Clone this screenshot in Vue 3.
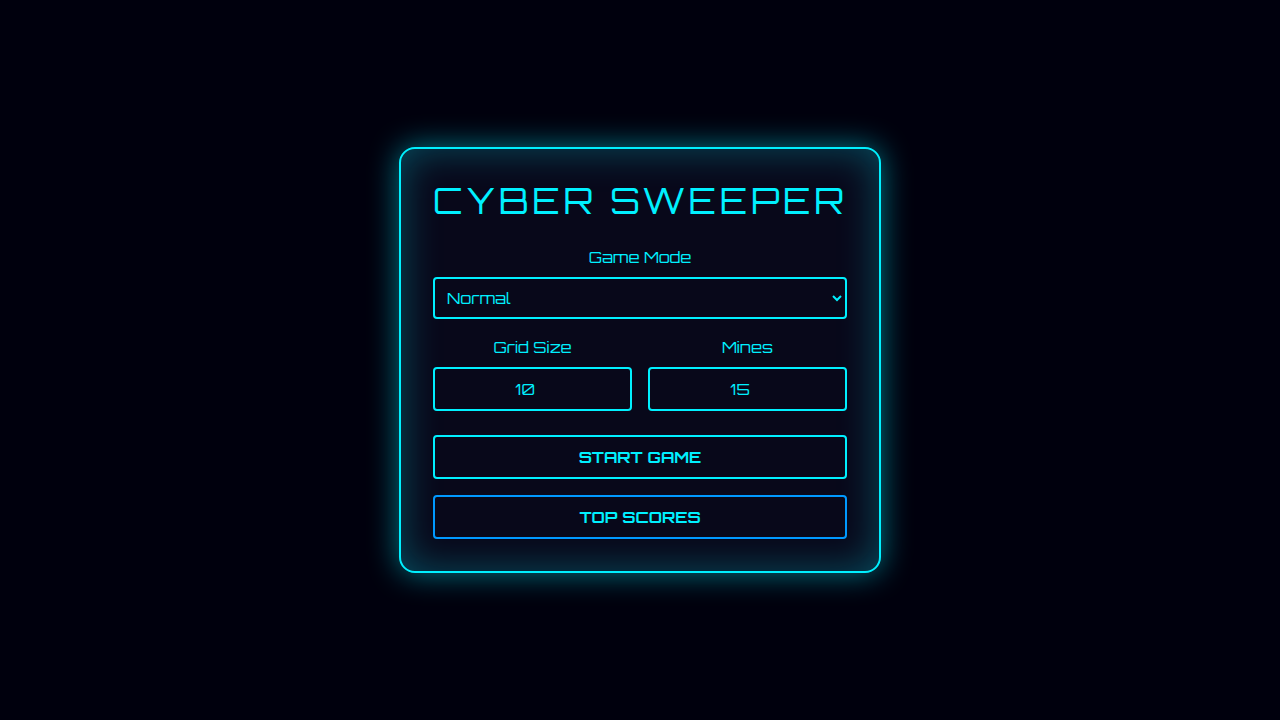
<template>
  <div class="screen">
    <div class="menu">
      <h1 class="title">CYBER SWEEPER</h1>

      <div class="field">
        <label class="label">Game Mode</label>
        <select v-model="mode" class="control select">
          <option v-for="m in modes" :key="m">{{ m }}</option>
        </select>
      </div>

      <div class="row">
        <div class="field">
          <label class="label">Grid Size</label>
          <input v-model="gridSize" class="control number" type="number" />
        </div>
        <div class="field">
          <label class="label">Mines</label>
          <input v-model="mines" class="control number" type="number" />
        </div>
      </div>

      <button class="btn">START GAME</button>
      <button class="btn btn-alt">TOP SCORES</button>
    </div>
  </div>
</template>

<script setup>
import { ref } from "vue";

const modes = ["Normal", "Hard", "Insane"];
const mode = ref("Normal");
const gridSize = ref(10);
const mines = ref(15);
</script>

<style>
html,
body {
  background: #00000d;
}
</style>

<style scoped>
.screen {
  display: flex;
  align-items: center;
  justify-content: center;
  min-height: 100vh;
  background: #00000d;
  font-family: Orbitron, "DejaVu Sans", sans-serif;
  color: #00f0ff;
}

.menu {
  box-sizing: border-box;
  display: flex;
  flex-direction: column;
  width: 482px;
  padding: 32px;
  border: 2px solid #00f0ff;
  border-radius: 16px;
  background: #08081a;
  box-shadow: 0 0 30px rgba(0, 240, 255, 0.5), inset 0 0 40px rgba(0, 240, 255, 0.3);
}

.title {
  margin: 0 0 26px;
  font-size: 36px;
  font-weight: 400;
  line-height: 40px;
  letter-spacing: 3.6px;
  text-align: center;
  white-space: nowrap;
}

.field {
  display: flex;
  flex-direction: column;
  min-width: 0;
  margin-bottom: 18px;
}

.label {
  margin-bottom: 10px;
  font-size: 16px;
  line-height: 20px;
  text-align: center;
}

.control {
  box-sizing: border-box;
  width: 100%;
  border: 2px solid #00f0ff;
  border-radius: 4px;
  background: #08081a;
  color: #00f0ff;
  font-family: inherit;
  font-size: 16px;
  outline: none;
}

.select {
  height: 42px;
  padding: 0 8px;
}

.number {
  height: 44px;
  text-align: center;
}

.row {
  display: grid;
  grid-template-columns: 1fr 1fr;
  gap: 16px;
  margin-bottom: 6px;
}

.btn {
  box-sizing: border-box;
  height: 44px;
  border: 2px solid #00f0ff;
  border-radius: 4px;
  background: #08081a;
  color: #00f0ff;
  font-family: inherit;
  font-size: 16px;
  font-weight: 700;
  margin-bottom: 16px;
}

.btn-alt {
  margin-bottom: 0;
  border-color: #0099ff;
}
</style>
